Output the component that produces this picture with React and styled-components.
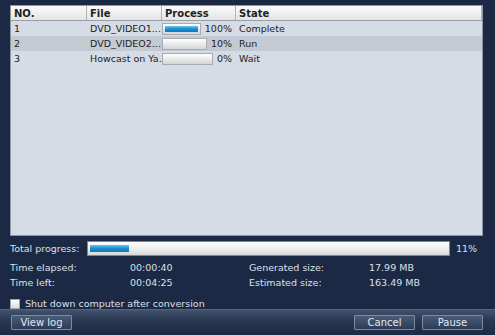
import React from "react";
import styled, { createGlobalStyle } from "styled-components";

const Global = createGlobalStyle`
  html, body { margin: 0; padding: 0; background: #1b2945; }
  body { font-family: "DejaVu Sans", Verdana, sans-serif; font-size: 9.5px; }
`;

const Window = styled.div`
  width: 495px;
  height: 335px;
  display: flex;
  flex-direction: column;
  background: #1b2945;
  color: #d8dde6;
`;

const Body = styled.div`
  flex: 1;
  display: flex;
  flex-direction: column;
  padding: 5px 12px 0 10px;
`;

const Table = styled.div`
  height: 231px;
  background: #d6dce5;
  border: 1px solid #8c96a6;
  box-sizing: border-box;
  display: flex;
  flex-direction: column;
`;

const Row = styled.div`
  display: grid;
  grid-template-columns: 76px 75px 74px 1fr;
  height: ${(p) => (p.head ? "14px" : "15px")};
  align-items: center;
  background: ${(p) =>
    p.head
      ? "linear-gradient(#fbfbfb, #e4e4e4)"
      : p.selected
      ? "#c4cad3"
      : "transparent"};
  border-bottom: ${(p) => (p.head ? "1px solid #9aa0a8" : "none")};
  color: #1a1a1a;
`;

const Cell = styled.div`
  padding-left: 3px;
  font-weight: ${(p) => (p.head ? "bold" : "normal")};
  font-size: ${(p) => (p.head ? "10px" : "9.5px")};
  border-right: ${(p) => (p.head ? "1px solid #b0b4ba" : "none")};
  height: 100%;
  display: flex;
  align-items: center;
  white-space: nowrap;
  overflow: hidden;
  color: #222;
`;

const ProcCell = styled.div`
  display: flex;
  align-items: center;
  gap: 4px;
  padding-right: 4px;
  height: 100%;
`;

const Bar = styled.div`
  flex: 1;
  height: 12px;
  border: 1px solid #a8acb2;
  background: linear-gradient(#ffffff, #e6e6e6 60%, #d4d4d4);
  box-sizing: border-box;
  padding: 2px;
  display: flex;
`;

const Fill = styled.div`
  height: 100%;
  background: linear-gradient(#6cc4ec, #1a8fd0 50%, #0f78bc);
`;

const Pct = styled.span`
  color: #222;
`;

const TotalRow = styled.div`
  display: flex;
  align-items: center;
  margin-top: 5px;
  height: 15px;
`;

const Label = styled.span`
  width: ${(p) => p.w || "auto"};
  flex-shrink: 0;
  color: #dbe0e8;
  white-space: nowrap;
`;

const BigBar = styled.div`
  width: 363px;
  height: 15px;
  box-sizing: border-box;
  border: 1px solid #7d8798;
  background: linear-gradient(#ffffff, #ececec 60%, #d6d6d6);
  padding: 3px 2px;
  display: flex;
`;

const StatGrid = styled.div`
  display: grid;
  grid-template-columns: 120px 119px 120px 1fr;
  row-gap: 4px;
  margin-top: 6px;
  color: #dbe0e8;
`;

const Check = styled.label`
  display: flex;
  align-items: center;
  gap: 5px;
  margin-top: 10px;
  color: #dbe0e8;
`;

const Box = styled.span`
  width: 10px;
  height: 10px;
  background: linear-gradient(#ffffff, #dcdcdc);
  border: 1px solid #9aa3b0;
  box-sizing: border-box;
`;

const Footer = styled.div`
  height: 25px;
  display: flex;
  align-items: center;
  justify-content: space-between;
  padding: 0 12px 0 11px;
  background: linear-gradient(#44536d, #2a3953 40%, #1c2a44);
  border-top: 1px solid #56647c;
`;

const Btn = styled.button`
  width: 61px;
  height: 15px;
  padding: 0;
  font-family: inherit;
  font-size: 10px;
  color: #e4e8ee;
  background: linear-gradient(#4b5c78, #2c3c58);
  border: 1px solid #7c8aa2;
  border-radius: 1px;
`;

const Btns = styled.div`
  display: flex;
  gap: 7px;
`;

const jobs = [
  { no: "1", file: "DVD_VIDEO1...", pct: 100, state: "Complete" },
  { no: "2", file: "DVD_VIDEO2...", pct: 10, state: "Run", selected: true },
  { no: "3", file: "Howcast on Ya.", pct: 0, state: "Wait" },
];

export default function App() {
  return (
    <Window>
      <Global />
      <Body>
        <Table>
          <Row head>
            <Cell head>NO.</Cell>
            <Cell head>File</Cell>
            <Cell head>Process</Cell>
            <Cell head>State</Cell>
          </Row>
          {jobs.map((j) => (
            <Row key={j.no} selected={j.selected}>
              <Cell>{j.no}</Cell>
              <Cell>{j.file}</Cell>
              <ProcCell>
                <Bar>
                  {j.pct === 100 && <Fill style={{ width: "100%" }} />}
                </Bar>
                <Pct>{j.pct}%</Pct>
              </ProcCell>
              <Cell>{j.state}</Cell>
            </Row>
          ))}
        </Table>
        <TotalRow>
          <Label w="77px">Total progress:</Label>
          <BigBar>
            <Fill style={{ width: "11%" }} />
          </BigBar>
          <Label style={{ marginLeft: 6 }}>11%</Label>
        </TotalRow>
        <StatGrid>
          <Label>Time elapsed:</Label>
          <Label>00:00:40</Label>
          <Label>Generated size:</Label>
          <Label>17.99 MB</Label>
          <Label>Time left:</Label>
          <Label>00:04:25</Label>
          <Label>Estimated size:</Label>
          <Label>163.49 MB</Label>
        </StatGrid>
        <Check>
          <Box />
          Shut down computer after conversion
        </Check>
      </Body>
      <Footer>
        <Btn>View log</Btn>
        <Btns>
          <Btn>Cancel</Btn>
          <Btn>Pause</Btn>
        </Btns>
      </Footer>
    </Window>
  );
}
